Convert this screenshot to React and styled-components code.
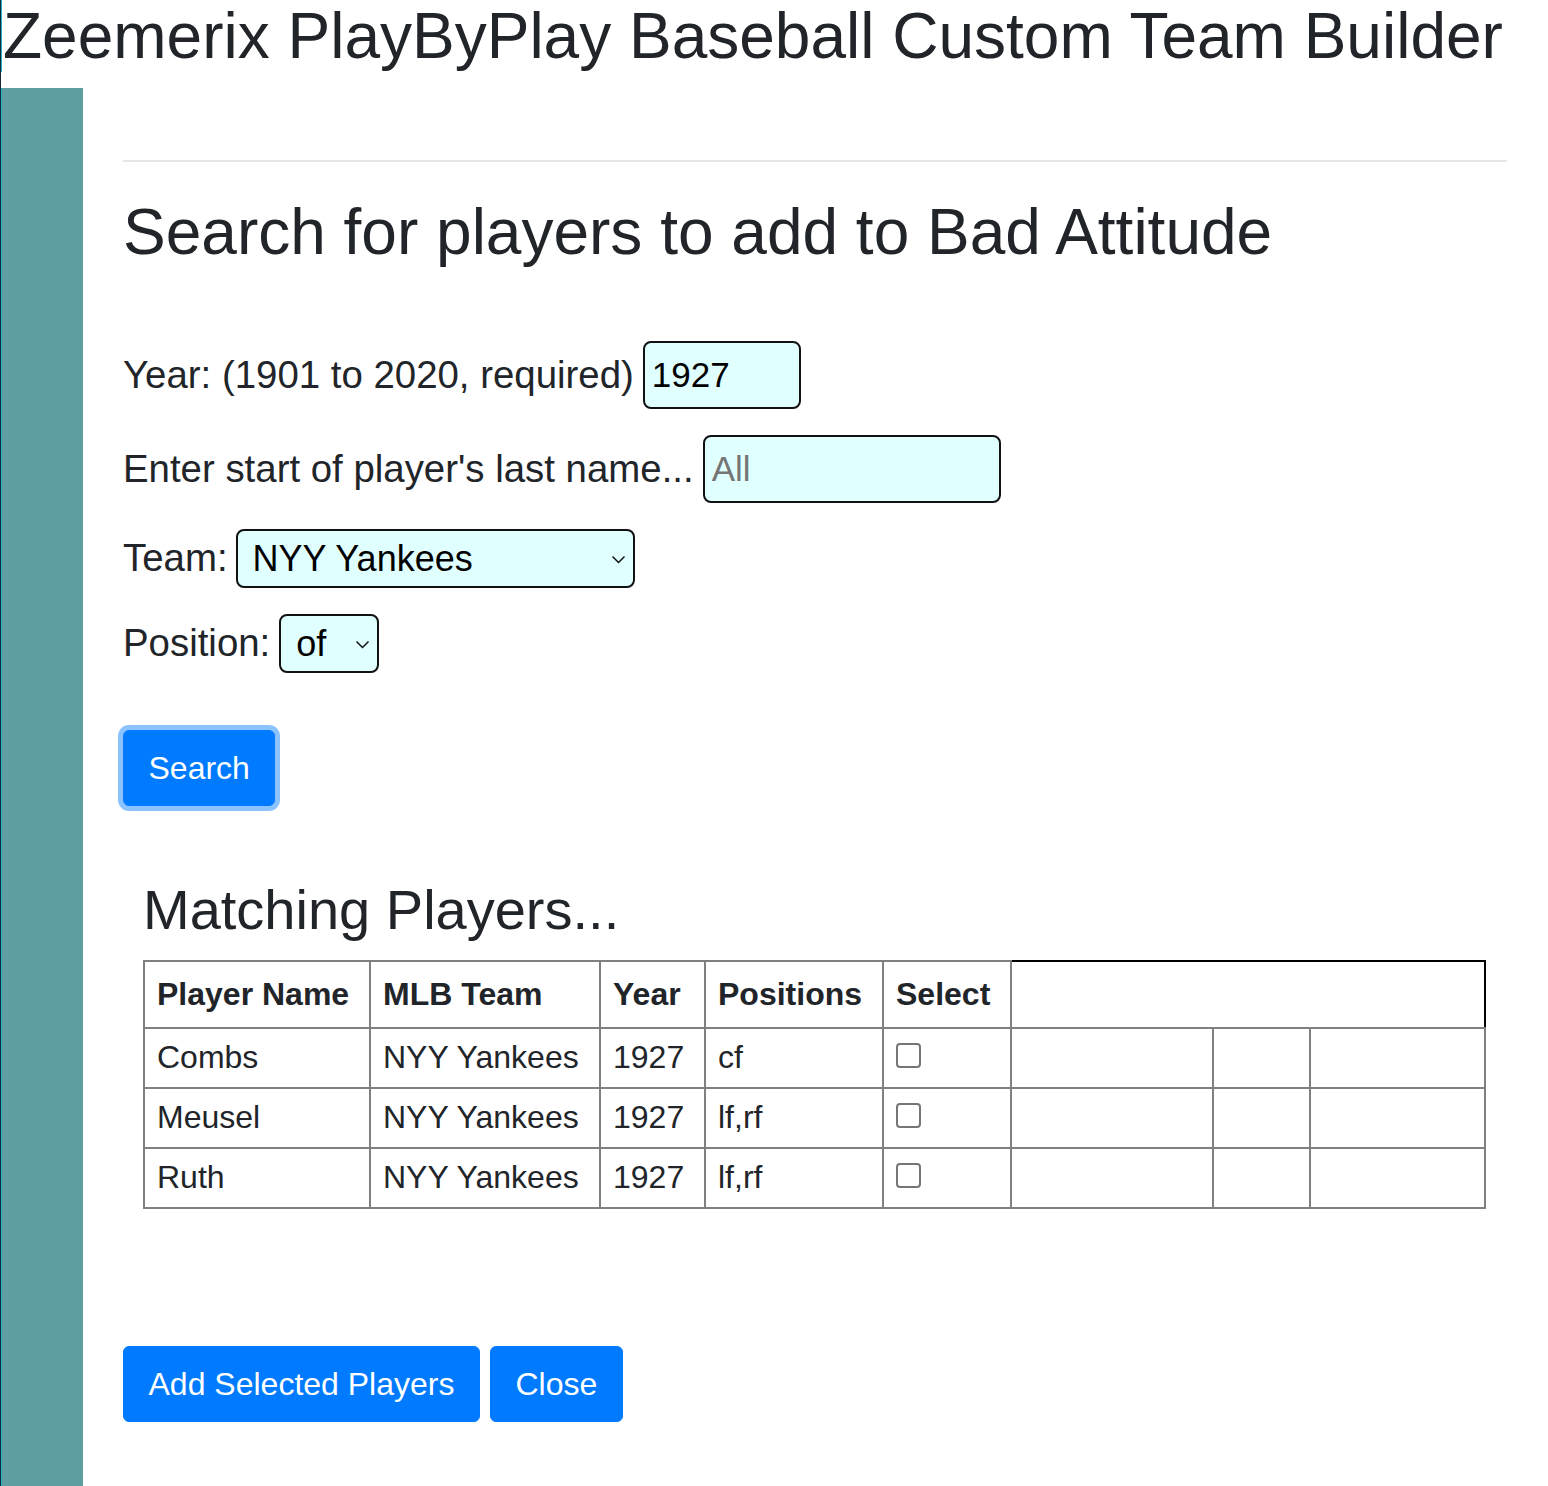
import React from "react";
import styled, { createGlobalStyle } from "styled-components";

const GlobalStyle = createGlobalStyle`
  html, body {
    margin: 0;
    padding: 0;
    background: #fff;
  }
  body {
    font-family: "Liberation Sans", Arial, sans-serif;
    color: #212529;
  }
`;

const players = [
  { name: "Combs", team: "NYY Yankees", year: 1927, pos: "cf" },
  { name: "Meusel", team: "NYY Yankees", year: 1927, pos: "lf,rf" },
  { name: "Ruth", team: "NYY Yankees", year: 1927, pos: "lf,rf" },
];

// widths of the result table columns, the last three are empty
const colWidths = [226, 230, 105, 178, 128, 202, 97, 175];

function Chevron() {
  return (
    <ChevronIcon width="15" height="9" viewBox="0 0 15 9">
      <path d="M1.5 1.5 L7.5 7.5 L13.5 1.5" fill="none" stroke="#111" strokeWidth="1.5" />
    </ChevronIcon>
  );
}

function App() {
  return (
    <Page>
      <GlobalStyle />
      <Title>Zeemerix PlayByPlay Baseball Custom Team Builder</Title>
      <Layout>
        <Sidebar />
        <Main>
          <Rule />
          <Heading>Search for players to add to Bad Attitude</Heading>

          <FormRow>
            <Label>Year: (1901 to 2020, required)</Label>
            <TextInput $width={158} defaultValue="1927" />
          </FormRow>
          <FormRow>
            <Label>Enter start of player's last name...</Label>
            <TextInput $width={298} placeholder="All" />
          </FormRow>
          <FormRow $compact>
            <Label>Team:</Label>
            <SelectWrap>
              <Select $width={399} defaultValue="NYY">
                <option value="NYY">NYY Yankees</option>
              </Select>
              <Chevron />
            </SelectWrap>
          </FormRow>
          <FormRow>
            <Label>Position:</Label>
            <SelectWrap>
              <Select $width={100} defaultValue="of">
                <option value="of">of</option>
              </Select>
              <Chevron />
            </SelectWrap>
          </FormRow>

          <SearchRow>
            <Button $focused>Search</Button>
          </SearchRow>

          <Results>
            <SubHeading>Matching Players...</SubHeading>
            <Table>
              <colgroup>
                {colWidths.map((w, i) => (
                  <Col key={i} $width={w} />
                ))}
              </colgroup>
              <thead>
                <tr>
                  <Th>Player Name</Th>
                  <Th>MLB Team</Th>
                  <Th>Year</Th>
                  <Th>Positions</Th>
                  <Th>Select</Th>
                </tr>
              </thead>
              <tbody>
                {players.map((p) => (
                  <tr key={p.name}>
                    <Td>{p.name}</Td>
                    <Td>{p.team}</Td>
                    <Td>{p.year}</Td>
                    <Td>{p.pos}</Td>
                    <Td>
                      <Check type="checkbox" />
                    </Td>
                    <Td />
                    <Td />
                    <Td />
                  </tr>
                ))}
              </tbody>
            </Table>
          </Results>

          <ActionRow>
            <Button>Add Selected Players</Button>
            <Button>Close</Button>
          </ActionRow>
        </Main>
      </Layout>
    </Page>
  );
}

export default App;

const Page = styled.div`
  border-left: 1px solid #14283a;
  min-height: 100vh;
  box-sizing: border-box;
`;

const Title = styled.h1`
  margin: 0 0 16px 0;
  padding-left: 1px;
  border-left: 1px solid #1fb5c4;
  font-size: 64px;
  font-weight: 400;
  line-height: 72px;
  white-space: nowrap;
`;

const Layout = styled.div`
  display: flex;
  min-height: calc(100vh - 88px);
  border-left: 1px solid #1fb5c4;
`;

const Sidebar = styled.div`
  width: 81px;
  flex: none;
  background: #5f9ea0;
`;

const Main = styled.div`
  flex: 1;
  padding: 72px 42px 60px 40px;
`;

const Rule = styled.hr`
  margin: 0;
  border: 0;
  border-top: 2px solid #e6e6e6;
`;

const Heading = styled.h2`
  margin: 32px 0 70px 0;
  font-size: 64px;
  font-weight: 400;
  line-height: 76.8px;
`;

const FormRow = styled.div`
  display: flex;
  align-items: center;
  gap: ${(p) => (p.$compact ? 8 : 9)}px;
  margin-bottom: 26px;
`;

const Label = styled.span`
  font-size: 38.4px;
  white-space: nowrap;
`;

const TextInput = styled.input`
  box-sizing: border-box;
  width: ${(p) => p.$width}px;
  height: 68px;
  padding: 0 7px;
  border: 2px solid #111;
  border-radius: 8px;
  background: #e0ffff;
  font-family: "Liberation Sans", Arial, sans-serif;
  font-size: 35px;
  color: #000;
  outline: none;

  &::placeholder {
    color: #757575;
  }
`;

const SelectWrap = styled.div`
  position: relative;
  display: inline-flex;
`;

const Select = styled.select`
  appearance: none;
  box-sizing: border-box;
  width: ${(p) => p.$width}px;
  height: 59px;
  padding: 0 30px 0 15px;
  border: 2px solid #111;
  border-radius: 8px;
  background: #e0ffff;
  font-family: "Liberation Sans", Arial, sans-serif;
  font-size: 36px;
  color: #000;
  outline: none;
`;

const ChevronIcon = styled.svg`
  position: absolute;
  right: 9px;
  top: 50%;
  margin-top: -3px;
  pointer-events: none;
`;

const SearchRow = styled.div`
  margin-top: 57px;
  display: flex;
`;

const Button = styled.button`
  box-sizing: border-box;
  height: 76px;
  padding: 0 24.5px;
  border: 1px solid #007bff;
  border-radius: 6px;
  background: #007bff;
  color: #fff;
  font-family: "Liberation Sans", Arial, sans-serif;
  font-size: 32px;
  line-height: 48px;
  cursor: pointer;
  box-shadow: ${(p) => (p.$focused ? "0 0 0 5px rgba(0, 123, 255, 0.45)" : "none")};
`;

const Results = styled.div`
  margin: 72px 21px 0 20px;
`;

const SubHeading = styled.h3`
  margin: 0 0 18px 0;
  font-size: 56px;
  font-weight: 400;
  line-height: 64px;
`;

const Table = styled.table`
  width: 1341px;
  table-layout: fixed;
  border-collapse: collapse;
  border: 2px solid #000;
`;

const Col = styled.col`
  width: ${(p) => p.$width}px;
`;

const Th = styled.th`
  padding: 14px 12px;
  border: 2px solid #808080;
  text-align: left;
  font-size: 32px;
  font-weight: 700;
  line-height: 37px;
  white-space: nowrap;
`;

const Td = styled.td`
  padding: 10.5px 12px;
  border: 2px solid #808080;
  font-size: 32px;
  line-height: 37px;
  white-space: nowrap;
  vertical-align: middle;
`;

const Check = styled.input`
  appearance: none;
  display: block;
  box-sizing: border-box;
  width: 25px;
  height: 25px;
  margin: 0 0 5px 0;
  border: 2px solid #767676;
  border-radius: 4px;
  background: #fff;
`;

const ActionRow = styled.div`
  display: flex;
  gap: 10px;
  margin-top: 137px;
`;
